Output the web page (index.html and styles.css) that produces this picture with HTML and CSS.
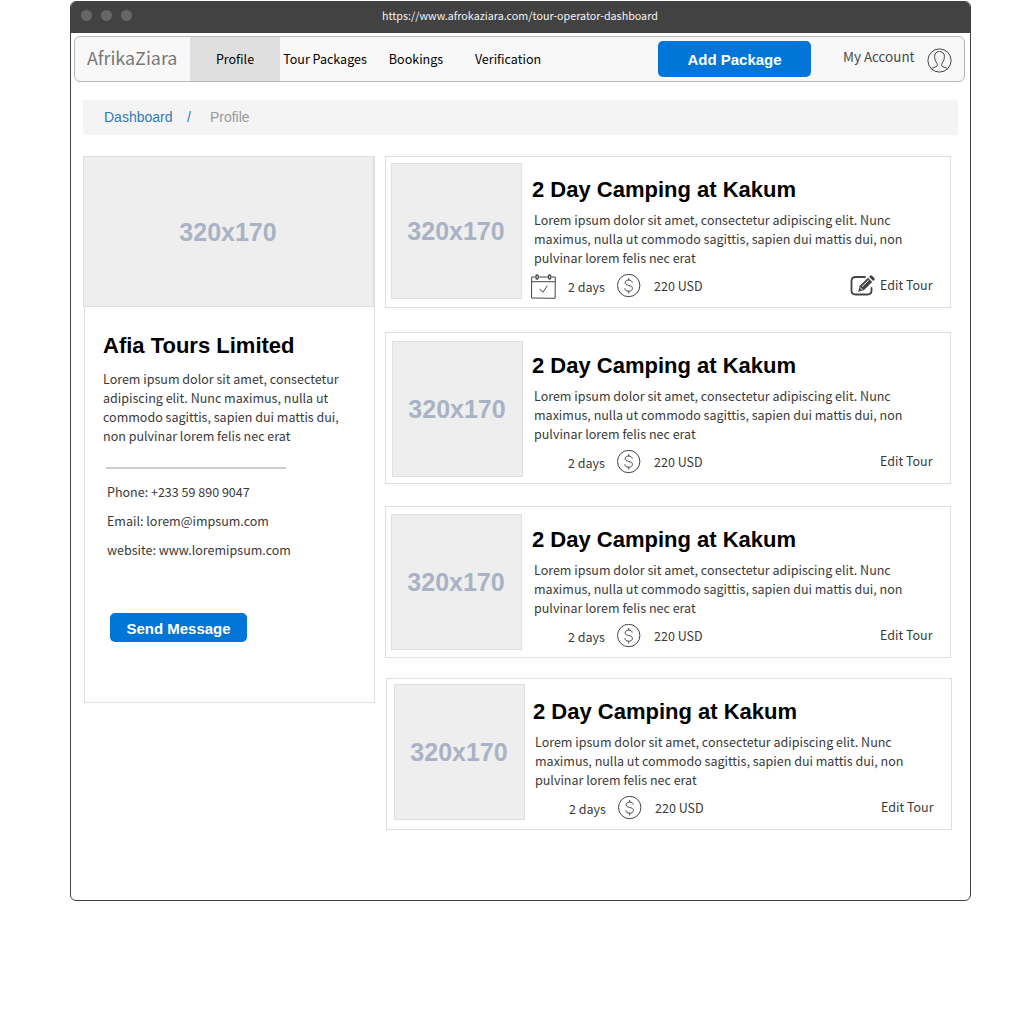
FILE: index.html
```html
<!DOCTYPE html>
<html lang="en">
<head>
<meta charset="utf-8">
<title>AfrikaZiara</title>
<link rel="stylesheet" href="styles.css">
</head>
<body>
<svg class="defs" aria-hidden="true">
  <symbol id="dollar" viewBox="0 0 24 24">
    <circle cx="11.700" cy="11.500" r="11.200"/>
    <path d="M15.200 8.600C15 7 13.800 6.100 11.700 6.100c-2.100 0-3.500 1-3.500 2.600 0 1.800 1.500 2.300 3.500 2.800 2.200.5 3.700 1.100 3.700 3 0 1.700-1.500 2.700-3.700 2.700-2.400 0-3.800-1.100-3.900-2.900M11.700 4.100v2M11.700 17.200v2.300"/>
  </symbol>
</svg>
<div class="window">
  <header class="titlebar">
    <span class="dots"><i></i><i></i><i></i></span>
    <span class="url">https://www.afrokaziara.com/tour-operator-dashboard</span>
  </header>
  <nav class="navbar">
    <span class="brand">AfrikaZiara</span>
    <a class="tab tab-active">Profile</a>
    <a class="tab">Tour Packages</a>
    <a class="tab tab-wide">Bookings</a>
    <a class="tab tab-wide">Verification</a>
    <button class="btn btn-add">Add Package</button>
    <span class="account">My Account</span>
    <svg class="avatar" viewBox="0 0 25 25"><circle cx="12.500" cy="12.500" r="11.600"/><path d="M4.400 20.800c1.200-1.200 4.800-1.600 5.700-2.800.5-.8.200-2-.2-2.700-1.500-2-2.300-4.300-2.300-6.800C7.600 5.300 9.600 3.500 12.500 3.500s4.900 1.800 4.900 5c0 2.500-.8 4.800-2.300 6.800-.4.700-.7 1.900-.2 2.700.9 1.200 4.500 1.600 5.700 2.800"/></svg>
  </nav>
  <div class="breadcrumb"><a>Dashboard</a><span class="sep">/</span><span class="here">Profile</span></div>
  <main class="content">
    <aside class="profile">
      <div class="placeholder cover">320x170</div>
      <h2 class="name">Afia Tours Limited</h2>
      <p class="about">Lorem ipsum dolor sit amet, consectetur<br>adipiscing elit. Nunc maximus, nulla ut<br>commodo sagittis, sapien dui mattis dui,<br>non pulvinar lorem felis nec erat</p>
      <hr class="rule">
      <ul class="contact">
        <li>Phone: +233 59 890 9047</li>
        <li>Email: lorem@impsum.com</li>
        <li>website: www.loremipsum.com</li>
      </ul>
      <button class="btn btn-send">Send Message</button>
    </aside>
    <section class="tours">
      <article class="tour">
        <div class="placeholder thumb thumb-first">320x170</div>
        <div class="details">
          <h3 class="title">2 Day Camping at Kakum</h3>
          <p class="text">Lorem ipsum dolor sit amet, consectetur adipiscing elit. Nunc<br>maximus, nulla ut commodo sagittis, sapien dui mattis dui, non<br>pulvinar lorem felis nec erat</p>
          <div class="meta">
            <span class="slot"><svg class="calendar" viewBox="0 0 25 25"><path d="M4.500 3H.7L.5 24l23.600.3.200-21.300h-3.800M8 3h9M.7 7.700h23.500"/><rect class="ring" x="5" y="1" width="2.200" height="4" rx="1"/><rect class="ring" x="17.500" y="1" width="2.200" height="4" rx="1"/><path d="M8.600 14.900l3.300 3.400 4.400-6.600"/></svg></span>
            <span class="days">2 days</span>
            <svg class="dollar"><use href="#dollar"/></svg>
            <span class="price">220 USD</span>
            <svg class="pencil" viewBox="0 0 25 22"><path class="line" d="M15 2H5.500Q1.500 2 1.500 6v9.500q0 4 4 4h12q4 0 4-4V13"/><path class="solid" d="M8.200 16.800l1.300-5.800L18 2.700l4.200 4.200-8.400 8.400zM19 1.700l1-1q1-.9 2 0l2.300 2.300q.9 1 0 2l-1 1z"/><path class="cut" d="M12 11.700l6.700-6.500M9.800 12.300l2.800 2.800"/></svg>
            <a class="edit">Edit Tour</a>
          </div>
        </div>
      </article>
      <article class="tour tour-second">
        <div class="placeholder thumb thumb-second">320x170</div>
        <div class="details">
          <h3 class="title">2 Day Camping at Kakum</h3>
          <p class="text">Lorem ipsum dolor sit amet, consectetur adipiscing elit. Nunc<br>maximus, nulla ut commodo sagittis, sapien dui mattis dui, non<br>pulvinar lorem felis nec erat</p>
          <div class="meta">
            <span class="slot"></span>
            <span class="days">2 days</span>
            <svg class="dollar"><use href="#dollar"/></svg>
            <span class="price">220 USD</span>
            <a class="edit">Edit Tour</a>
          </div>
        </div>
      </article>
      <article class="tour tour-third">
        <div class="placeholder thumb thumb-third">320x170</div>
        <div class="details">
          <h3 class="title">2 Day Camping at Kakum</h3>
          <p class="text">Lorem ipsum dolor sit amet, consectetur adipiscing elit. Nunc<br>maximus, nulla ut commodo sagittis, sapien dui mattis dui, non<br>pulvinar lorem felis nec erat</p>
          <div class="meta">
            <span class="slot"></span>
            <span class="days">2 days</span>
            <svg class="dollar"><use href="#dollar"/></svg>
            <span class="price">220 USD</span>
            <a class="edit">Edit Tour</a>
          </div>
        </div>
      </article>
      <article class="tour tour-fourth">
        <div class="placeholder thumb thumb-fourth">320x170</div>
        <div class="details">
          <h3 class="title">2 Day Camping at Kakum</h3>
          <p class="text">Lorem ipsum dolor sit amet, consectetur adipiscing elit. Nunc<br>maximus, nulla ut commodo sagittis, sapien dui mattis dui, non<br>pulvinar lorem felis nec erat</p>
          <div class="meta">
            <span class="slot"></span>
            <span class="days">2 days</span>
            <svg class="dollar"><use href="#dollar"/></svg>
            <span class="price">220 USD</span>
            <a class="edit">Edit Tour</a>
          </div>
        </div>
      </article>
    </section>
  </main>
</div>
</body>
</html>
```
FILE: styles.css
```css
* { box-sizing: border-box; margin: 0; padding: 0; }
body {
  background: #fff;
  padding: 1px 0 0 70px;
  font: 12.53px/19px "Noto Sans CJK SC", "Noto Sans", sans-serif;
  color: #3a3a3a;
}
.defs { display: none; }
svg { fill: none; stroke: #444; stroke-width: 1; flex: none; }
.window {
  width: 901px;
  height: 900px;
  border: 1px solid #424242;
  border-radius: 6px;
  overflow: hidden;
}
.titlebar {
  display: flex;
  align-items: center;
  height: 31px;
  background: #424242;
}
.dots { display: flex; gap: 9px; width: 311px; padding: 0 0 4px 10px; }
.dots i { width: 11px; height: 11px; border-radius: 50%; background: #666; }
.url { padding-bottom: 5px; font-size: 10.74px; color: #f5f5f5; white-space: nowrap; }

.navbar {
  display: flex;
  width: 891px;
  height: 46px;
  margin: 3px 0 0 3px;
  border: 1px solid #b8b8b8;
  border-radius: 6px;
  background: #f8f8f8;
}
.brand { width: 115px; padding-left: 12px; font-size: 17.9px; line-height: 41px; color: #777; }
.tab { width: 90px; text-align: center; line-height: 44px; color: #000; white-space: nowrap; }
.tab-active { background: #dfdfdf; }
.tab-wide { width: 92px; }
.btn {
  border: 0;
  border-radius: 5px;
  background: #0275d8;
  color: #fff;
  font: bold 15px "Liberation Sans", Arial, sans-serif;
}
.btn-add { width: 153px; height: 36px; margin: 4px 0 0 104px; padding-top: 1px; }
.account { width: 84px; margin-left: 32px; font-size: 13.43px; line-height: 39px; color: #4a4a4a; white-space: nowrap; }
.avatar { width: 25px; height: 25px; margin-top: 11px; }

.breadcrumb {
  display: flex;
  width: 875px;
  height: 35px;
  margin: 18px 0 0 12px;
  padding-left: 21px;
  border-radius: 2px;
  background: #f4f4f4;
  font: 14px/35px "Liberation Sans", Arial, sans-serif;
  color: #337ab7;
}
.sep { margin: 0 19px 0 14.500px; }
.here { color: #999; }

.content { display: flex; align-items: flex-start; gap: 10px; padding: 21px 0 0 13px; }
.placeholder {
  display: flex;
  align-items: center;
  justify-content: center;
  padding-right: 1px;
  border: 1px solid #dfdfdf;
  background: #eee;
  color: #aab2c5;
  font: bold 25px "Liberation Sans", Arial, sans-serif;
}
.profile { width: 291px; height: 547px; border: 1px solid #dfdfdf; }
.cover { width: 291px; height: 151px; margin: -1px 0 0 -2px; padding-top: 2px; }
.name, .title { font: bold 22px/26px "Liberation Sans", Arial, sans-serif; color: #000; }
.name { margin: 26px 0 0 18px; }
.about { margin: 10px 0 0 18px; white-space: nowrap; }
.rule { width: 180px; height: 2px; margin: 22px 0 0 21px; border: 0; background: #ccc; }
.contact { margin: 8px 0 0 22px; list-style: none; line-height: 29px; }
.btn-send { display: block; width: 137px; height: 29px; margin: 49px 0 0 25px; padding-top: 2px; }

.tours { width: 567px; }
.tour { display: grid; grid-template-columns: 146px 1fr; width: 566px; height: 152px; border: 1px solid #dfdfdf; }
.tour-second { margin-top: 24px; }
.tour-third { margin-top: 22px; }
.tour-fourth { margin: 20px 0 0 1px; }
.thumb { width: 131px; height: 136px; }
.thumb-first { margin: 6px 0 0 5px; }
.thumb-second { margin: 8px 0 0 6px; }
.thumb-third { margin: 7px 0 0 5px; }
.thumb-fourth { margin: 5px 0 0 7px; }
.title { margin-top: 20px; }
.text { margin: 7px 0 0 2px; white-space: nowrap; }
.meta { display: flex; height: 31px; padding-top: 7px; margin-left: -1px; }
.slot { width: 37px; }
.calendar { width: 25px; height: 25px; display: block; }
.calendar .ring { stroke-width: 1.3; }
.days { width: 49px; padding-top: 3px; }
.dollar { width: 24px; height: 24px; }
.price { padding: 2px 0 0 13px; }
.pencil { width: 25px; height: 22px; margin: 1px 5px 0 auto; }
.pencil .line { stroke-width: 1.8; stroke-linecap: round; }
.pencil .solid { fill: #424242; stroke: none; }
.pencil .cut { stroke: #fff; stroke-width: 1; }
.edit { width: 70px; padding-top: 1px; margin-left: auto; }
.pencil + .edit { margin-left: 0; }
```
